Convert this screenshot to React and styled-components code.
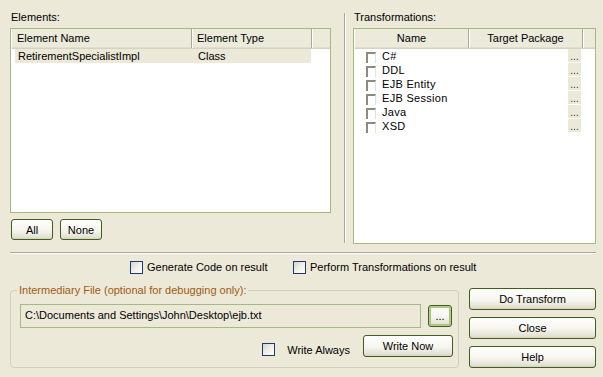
import styled, { createGlobalStyle } from "styled-components";

const GlobalStyle = createGlobalStyle`
  html, body {
    margin: 0;
    padding: 0;
    background: #ece9d8;
  }
  body {
    font-family: "Liberation Sans", Arial, sans-serif;
    font-size: 11px;
    color: #000000;
  }
`;

const elements = [{ name: "RetirementSpecialistImpl", type: "Class" }];
const transforms = ["C#", "DDL", "EJB Entity", "EJB Session", "Java", "XSD"];

export default function App() {
  return (
    <>
      <GlobalStyle />
      <Dialog>
        <TopArea>
          <LeftColumn>
            <Caption>Elements:</Caption>
            <ListBox $height={185}>
              <HeaderRow>
                <HeaderCell $width={180}>Element Name</HeaderCell>
                <HeaderCell $width={120}>Element Type</HeaderCell>
                <HeaderFill />
              </HeaderRow>
              {elements.map((el) => (
                <ElementRow key={el.name}>
                  <ElementCell $width={176}>{el.name}</ElementCell>
                  <ElementCell $width={120}>{el.type}</ElementCell>
                </ElementRow>
              ))}
            </ListBox>
            <ButtonRow>
              <Button $width={42}>All</Button>
              <Button $width={42}>None</Button>
            </ButtonRow>
          </LeftColumn>
          <Splitter />
          <RightColumn>
            <Caption>Transformations:</Caption>
            <ListBox $height={216}>
              <HeaderRow>
                <HeaderCell $width={114} $center>Name</HeaderCell>
                <HeaderCell $width={114} $center>Target Package</HeaderCell>
                <HeaderFill />
              </HeaderRow>
              {transforms.map((t) => (
                <TransformRow key={t}>
                  <ListCheck />
                  <TransformName>{t}</TransformName>
                  <Ellipsis>...</Ellipsis>
                </TransformRow>
              ))}
            </ListBox>
          </RightColumn>
        </TopArea>

        <Separator />

        <OptionsRow>
          <CheckLabel $width={163}>
            <XpCheck />
            Generate Code on result
          </CheckLabel>
          <CheckLabel>
            <XpCheck />
            Perform Transformations on result
          </CheckLabel>
        </OptionsRow>

        <BottomRow>
          <GroupBox>
            <Legend>Intermediary File (optional for debugging only):</Legend>
            <FieldRow>
              <FileField>C:\Documents and Settings\John\Desktop\ejb.txt</FileField>
              <Button $width={24} $height={22} $default>
                ...
              </Button>
            </FieldRow>
            <WriteRow>
              <WriteLabel>
                <XpCheck />
                <span>Write Always</span>
              </WriteLabel>
              <Button $width={90} $height={22}>
                Write Now
              </Button>
            </WriteRow>
          </GroupBox>
          <ActionColumn>
            <Button $width={127} $height={22}>Do Transform</Button>
            <Button $width={127} $height={22}>Close</Button>
            <Button $width={127} $height={22}>Help</Button>
          </ActionColumn>
        </BottomRow>
      </Dialog>
    </>
  );
}

const Dialog = styled.div`
  width: 603px;
  height: 377px;
  box-sizing: border-box;
  padding: 12px 0 0 10px;
  overflow: hidden;
`;

const TopArea = styled.div`
  display: flex;
  align-items: flex-start;
`;

const LeftColumn = styled.div`
  width: 321px;
  display: flex;
  flex-direction: column;
`;

const RightColumn = styled.div`
  width: 243px;
  display: flex;
  flex-direction: column;
`;

const Caption = styled.div`
  height: 16px;
  line-height: 11px;
  padding-left: 1px;
`;

const ListBox = styled.div`
  height: ${(p) => p.$height}px;
  box-sizing: border-box;
  border: 1px solid #a5b983;
  background: #ffffff;
  overflow: hidden;
`;

const HeaderRow = styled.div`
  display: flex;
  height: 20px;
  box-sizing: border-box;
  background: #ebeadb;
  border-bottom: 1px solid #d6d2c2;
  box-shadow: inset 0 -1px 0 #e2decd;
  margin-left: 1px;
`;

const HeaderCell = styled.div`
  width: ${(p) => p.$width}px;
  flex: none;
  box-sizing: border-box;
  padding-left: ${(p) => (p.$center ? 0 : 5)}px;
  text-align: ${(p) => (p.$center ? "center" : "left")};
  line-height: 19px;
  border-right: 1px solid #aca899;
  box-shadow: 1px 0 0 #ffffff;
  white-space: nowrap;
`;

const HeaderFill = styled.div`
  flex: 1;
`;

const ElementRow = styled.div`
  display: flex;
  height: 14px;
  margin-left: 4px;
  width: 296px;
  background: #ece9d8;
`;

const ElementCell = styled.div`
  width: ${(p) => p.$width}px;
  flex: none;
  box-sizing: border-box;
  padding-left: ${(p) => (p.$width > 150 ? 3 : 7)}px;
  line-height: 14px;
  white-space: nowrap;
`;

const TransformRow = styled.div`
  display: flex;
  align-items: center;
  height: 14px;
  padding-left: 12px;
`;

const ListCheck = styled.span`
  width: 10px;
  height: 11px;
  box-sizing: border-box;
  flex: none;
  border-top: 2px solid #8d8b80;
  border-left: 2px solid #8d8b80;
  border-right: 1px solid #e4e2d8;
  background: #ffffff;
  margin-top: 2px;
`;

const TransformName = styled.span`
  flex: 1;
  padding-left: 6px;
  line-height: 14px;
  letter-spacing: 0.3px;
`;

const Ellipsis = styled.span`
  width: 13px;
  height: 13px;
  margin-right: 14px;
  align-self: flex-start;
  background: #ece9d8;
  font-size: 10px;
  line-height: 15px;
  text-align: center;
  color: #333333;
`;

const Splitter = styled.div`
  width: 1px;
  height: 230px;
  margin: 1px 7px 0 13px;
  background: #aca899;
  border-right: 1px solid #ffffff;
`;

const ButtonRow = styled.div`
  display: flex;
  gap: 7px;
  margin-top: 6px;
  padding-left: 1px;
`;

const Button = styled.button`
  width: ${(p) => p.$width}px;
  height: ${(p) => p.$height || 21}px;
  padding: 0;
  box-sizing: border-box;
  font-family: "Liberation Sans", Arial, sans-serif;
  font-size: 11px;
  color: #000000;
  border: 1px solid #3f5f1c;
  border-radius: 3px;
  background: linear-gradient(to bottom, #ffffff 0%, #f6f5ee 55%, #e4e1d4 90%, #d6d1c2 100%);
  box-shadow: ${(p) =>
    p.$default
      ? "inset 0 0 0 1px #b7cf8e, inset 0 0 0 2px #a9c27e"
      : "none"};
  line-height: ${(p) => (p.$height || 21) - 3}px;
  white-space: nowrap;
`;

const Separator = styled.div`
  width: 586px;
  height: 1px;
  margin-top: 8px;
  background: #aca899;
  border-bottom: 1px solid #ffffff;
`;

const OptionsRow = styled.div`
  display: flex;
  margin-top: 7px;
  padding-left: 120px;
  height: 13px;
`;

const CheckLabel = styled.label`
  display: flex;
  align-items: center;
  gap: 4px;
  width: ${(p) => (p.$width ? `${p.$width}px` : "auto")};
  flex: none;
  line-height: 13px;
  white-space: nowrap;
`;

const XpCheck = styled.span`
  width: 13px;
  height: 13px;
  box-sizing: border-box;
  flex: none;
  border: 1px solid #1c3a72;
  background: linear-gradient(135deg, #d6d5cc 0%, #f2f1ea 55%, #ffffff 100%);
`;

const BottomRow = styled.div`
  display: flex;
  align-items: flex-start;
  gap: 10px;
  margin-top: 10px;
`;

const GroupBox = styled.fieldset`
  width: 449px;
  box-sizing: border-box;
  margin: 0;
  padding: 7px 5px 10px 9px;
  border: 1px solid #d0d0bf;
  border-radius: 4px;
`;

const Legend = styled.legend`
  padding: 0 2px;
  margin-left: -3px;
  color: #a25a10;
  line-height: 13px;
`;

const FieldRow = styled.div`
  display: flex;
  align-items: center;
  gap: 7px;
`;

const FileField = styled.div`
  width: 401px;
  height: 24px;
  box-sizing: border-box;
  border: 1px solid #a5b983;
  padding-left: 4px;
  line-height: 21px;
  white-space: nowrap;
`;

const WriteRow = styled.div`
  display: flex;
  justify-content: flex-end;
  align-items: center;
  gap: 13px;
  margin-top: 7px;
`;

const WriteLabel = styled.label`
  display: flex;
  align-items: center;
  gap: 12px;
  margin-top: 7px;
  white-space: nowrap;
`;

const ActionColumn = styled.div`
  display: flex;
  flex-direction: column;
  gap: 7px;
  margin-top: 4px;
`;
